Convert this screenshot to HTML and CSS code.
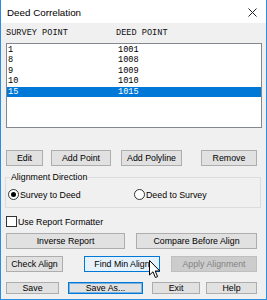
FILE: index.html
```html
<!DOCTYPE html>
<html lang="en">
<head>
    <meta charset="UTF-8">
    <meta name="viewport" content="width=device-width, initial-scale=1.0">
    <title>Deed Correlation</title>
    <link rel="stylesheet" href="styles.css">
</head>
<body>

    <div class="window">
        <div class="titlebar">
            <span class="title">Deed Correlation</span>
            <svg class="close" width="9" height="9" viewBox="0 0 9 9">
                <path d="M0.5 0.5 L8.5 8.5 M8.5 0.5 L0.5 8.5" stroke="#222" stroke-width="1" fill="none"/>
            </svg>
        </div>

        <div class="content">
            <div class="list-head">
                <span class="col">SURVEY POINT</span><span>DEED POINT</span>
            </div>
            <div class="list">
                <div class="row"><span class="col">1</span><span>1001</span></div>
                <div class="row"><span class="col">8</span><span>1008</span></div>
                <div class="row"><span class="col">9</span><span>1009</span></div>
                <div class="row"><span class="col">10</span><span>1010</span></div>
                <div class="row selected"><span class="col">15</span><span>1015</span></div>
            </div>

            <div class="btn-row row-edit">
                <button class="btn w-edit">Edit</button>
                <button class="btn w-addpoint">Add Point</button>
                <button class="btn w-addpoly">Add Polyline</button>
                <button class="btn w-remove">Remove</button>
            </div>

            <fieldset class="group">
                <legend>Alignment Direction</legend>
                <div class="radios">
                    <label class="radio"><span class="dot checked"></span>Survey to Deed</label>
                    <label class="radio second"><span class="dot"></span>Deed to Survey</label>
                </div>
            </fieldset>

            <label class="check"><span class="box"></span>Use Report Formatter</label>

            <div class="btn-row row-report">
                <button class="btn w-inverse">Inverse Report</button>
                <button class="btn w-compare">Compare Before Align</button>
            </div>

            <div class="btn-row row-align">
                <button class="btn w-check">Check Align</button>
                <button class="btn hot w-findmin">Find Min Align</button>
                <button class="btn disabled w-apply">Apply Alignment</button>
            </div>

            <div class="btn-row row-save">
                <button class="btn short w-save">Save</button>
                <button class="btn short default w-saveas">Save As...</button>
                <button class="btn short w-exit">Exit</button>
                <button class="btn short w-help">Help</button>
            </div>
        </div>

        <!-- mouse pointer over Find Min Align -->
        <svg class="cursor" width="12" height="19" viewBox="0 0 12 19">
            <path d="M0.5 0.5 L0.5 15 L4 11.8 L6.4 17.5 L8.6 16.6 L6.2 11 L10.8 11 Z" fill="#fff" stroke="#000" stroke-width="1" stroke-linejoin="round"/>
        </svg>
    </div>

</body>
</html>
```

FILE: styles.css
```css
/* Windows dialog look */
body {
    margin: 0;
    padding: 0;
    background-color: #fff;
    font-family: "Liberation Sans", Arial, sans-serif;
}

.window {
    position: relative;
    width: 267px;
    height: 300px;
    box-sizing: border-box;
    border: 1px solid #2b8de0;
    border-top: none;
    background-color: #f0f0f0;
    overflow: hidden;
}

/* Title bar */
.titlebar {
    height: 23px;
    background-color: #fff;
    display: flex;
    align-items: center;
    justify-content: space-between;
    padding: 0 9px 0 6px;
}

.title {
    font-size: 9.8px;
    color: #000;
    margin-top: 2px;
}

.close {
    display: block;
    margin-top: 1px;
}

.content {
    padding: 0 4px 0 5px;
}

/* Point list */
.list-head,
.list .row {
    display: flex;
    font-family: "Liberation Mono", "Courier New", monospace;
    font-size: 8.6px;
    white-space: pre;
}

.list-head {
    margin-top: 5px;
    height: 10px;
    line-height: 10px;
    color: #111;
}

.col {
    width: 110px;
}

.list {
    margin-top: 5px;
    height: 85px;
    box-sizing: border-box;
    border: 1px solid #828790;
    background-color: #fff;
    padding-top: 1px;
}

.list .row {
    height: 10.4px;
    line-height: 10.4px;
    padding-left: 1px;
    color: #000;
}

.list .row.selected {
    background-color: #0078d7;
    color: #fff;
}

/* Buttons */
.btn-row {
    display: flex;
}

.btn {
    height: 16px;
    box-sizing: border-box;
    padding: 0;
    margin: 0;
    border: 1px solid #adadad;
    background-color: #e1e1e1;
    color: #000;
    font-family: "Liberation Sans", Arial, sans-serif;
    font-size: 8.8px;
    line-height: 14px;
    text-align: center;
    white-space: nowrap;
}

.btn.short {
    height: 12px;
    line-height: 10px;
}

.btn.hot {
    background-color: #e5f1fb;
    border-color: #0078d7;
}

.btn.default {
    border-color: #0078d7;
    box-shadow: inset 0 0 0 1px rgba(0, 120, 215, 0.45);
}

.btn.disabled {
    background-color: #cccccc;
    border-color: #bfbfbf;
    color: #838383;
}

.row-edit { margin-top: 22px; }
.w-edit { width: 37px; }
.w-addpoint { width: 60px; margin-left: 8px; }
.w-addpoly { width: 61px; margin-left: 10px; }
.w-remove { width: 56px; margin-left: 19px; }

.row-report { margin-top: 6px; }
.w-inverse { width: 119px; }
.w-compare { width: 121px; margin-left: 11px; }

.row-align { margin-top: 7px; }
.w-check { width: 57px; }
.w-findmin { width: 76px; margin-left: 21px; }
.w-apply { width: 86px; margin-left: 11px; }

.row-save { margin-top: 10px; }
.w-save { width: 53px; }
.w-saveas { width: 75px; margin-left: 9px; }
.w-exit { width: 48px; margin-left: 9px; }
.w-help { width: 51px; margin-left: 6px; }

/* Alignment group */
.group {
    margin: 6px 1px 0 -1px;
    padding: 0 0 6px 0;
    border: 1px solid #dcdcdc;
    font-size: 8.8px;
}

.group legend {
    margin-left: 4px;
    padding: 0 1px;
    line-height: 11px;
    color: #000;
}

.radios {
    display: flex;
    margin-top: 5px;
    height: 13px;
    align-items: center;
}

.radio {
    display: flex;
    align-items: center;
    width: 126px;
    margin-left: 2px;
    color: #000;
}

.radio.second {
    margin-left: 0;
}

.dot {
    width: 11px;
    height: 11px;
    box-sizing: border-box;
    border: 1px solid #333;
    border-radius: 50%;
    background-color: #fff;
    margin-right: 1px;
    display: flex;
    align-items: center;
    justify-content: center;
}

.dot.checked::after {
    content: "";
    width: 5px;
    height: 5px;
    border-radius: 50%;
    background-color: #000;
}

/* Checkbox */
.check {
    display: flex;
    align-items: center;
    margin-top: 8px;
    height: 11px;
    font-size: 8.8px;
    color: #000;
}

.box {
    width: 11px;
    height: 11px;
    box-sizing: border-box;
    border: 1px solid #333;
    background-color: #fff;
    margin-right: 1px;
}

.cursor {
    position: absolute;
    left: 148px;
    top: 260px;
}
```
